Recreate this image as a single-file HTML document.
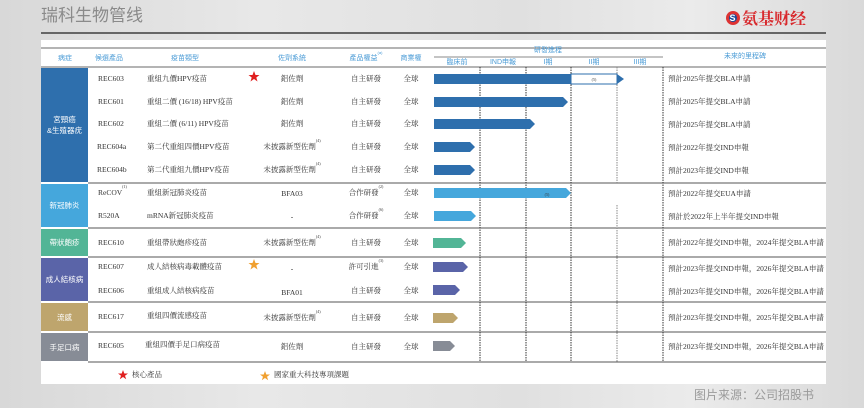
<!DOCTYPE html>
<html><head><meta charset="utf-8">
<style>
*{margin:0;padding:0;box-sizing:border-box}
body{width:864px;height:408px;overflow:hidden;background:#e2e2e2;position:relative;font-family:"Liberation Serif","Noto Serif CJK SC","Noto Sans CJK TC",serif;color:#333}
.a{position:absolute;white-space:nowrap}
.t{font-size:7.5px;line-height:10px}
.h{font-size:7px;color:#4a9bd6;font-family:"Liberation Sans","Noto Sans CJK TC",sans-serif;transform:translateX(-50%);line-height:9px}
.c{transform:translateX(-50%)}
sup{font-size:4px;line-height:0;vertical-align:top;position:relative;top:-1px}
.d{position:absolute;left:41px;width:47px;color:#fff;font-size:7.5px;font-family:"Liberation Sans","Noto Sans CJK TC",sans-serif;display:flex;align-items:center;justify-content:center;text-align:center;line-height:11px}
</style></head><body>
<div style="position:absolute;left:0;top:0;width:864px;height:408px;background:linear-gradient(90deg,#d8d8d8,#e8e8e8 30%,#e0e0e0 60%,#ebebeb 80%,#d9d9d9)"></div>
<div class="a" style="left:41px;top:5px;font-size:17px;color:#8a8a8a;font-family:'Liberation Sans','Noto Sans CJK SC',sans-serif;line-height:22px">瑞科生物管线</div>
<div class="a" style="left:726px;top:11px;width:14px;height:14px;border-radius:50%;background:#d33"><div style="position:absolute;left:3px;top:3px;width:8px;height:8px;border-radius:50%;background:#1d4c9a"></div><div style="position:absolute;left:3.5px;top:2px;color:#fff;font-size:9px;font-weight:bold;line-height:10px;font-family:'Liberation Sans'">S</div></div>
<div class="a" style="left:742px;top:7px;font-size:16px;font-weight:bold;color:#d8282c;font-family:'Noto Serif CJK SC',serif;line-height:22px">氨基财经</div>
<div class="a" style="left:41px;top:32px;width:785px;height:2px;background:#666"></div>
<div class="a" style="left:41px;top:40px;width:785px;height:344px;background:#fff"></div>
<svg class="a" style="left:0;top:0" width="864" height="408">
<line x1="41" y1="48" x2="826" y2="48" stroke="#888" stroke-width="1.2"/>
<line x1="41" y1="67" x2="826" y2="67" stroke="#888" stroke-width="1.2"/>
<line x1="434" y1="57" x2="663" y2="57" stroke="#888" stroke-width="1"/>
<g stroke="#555" stroke-width="1">
<line x1="88" y1="183" x2="826" y2="183"/><line x1="88" y1="228" x2="826" y2="228"/>
<line x1="88" y1="257" x2="826" y2="257"/><line x1="88" y1="302" x2="826" y2="302"/>
<line x1="88" y1="332" x2="826" y2="332"/><line x1="88" y1="362" x2="826" y2="362"/>
</g>
<g stroke="#333" stroke-width="1" stroke-dasharray="1.5,1">
<line x1="480" y1="67" x2="480" y2="362"/><line x1="526" y1="67" x2="526" y2="362"/>
<line x1="571" y1="67" x2="571" y2="362"/><line x1="663" y1="67" x2="663" y2="362"/>
</g>
<g stroke="#888" stroke-width="1" stroke-dasharray="1.5,1">
<line x1="617" y1="67" x2="617" y2="183"/><line x1="617" y1="205" x2="617" y2="362"/>
</g>
<g fill="#2e6fad">
<polygon points="434,74 571,74 571,84 434,84"/>
<rect x="571" y="74" width="46" height="10" fill="#fff" stroke="#2e6fad" stroke-width="1"/>
<polygon points="617,74 624,79 617,84"/>
<polygon points="434,97 563,97 568,102 563,107 434,107"/>
<polygon points="434,119 530,119 535,124 530,129 434,129"/>
<polygon points="434,142 470,142 475,147 470,152 434,152"/>
<polygon points="434,165 470,165 475,170 470,175 434,175"/>
</g>
<polygon fill="#45a7dc" points="434,188 566,188 571,193 566,198 434,198"/>
<polygon fill="#45a7dc" points="434,211 471,211 476,216 471,221 434,221"/>
<polygon fill="#52b596" points="433,238 461,238 466,243 461,248 433,248"/>
<polygon fill="#5a64a8" points="433,262 463,262 468,267 463,272 433,272"/>
<polygon fill="#5a64a8" points="433,285 455,285 460,290 455,295 433,295"/>
<polygon fill="#bea56d" points="433,313 453,313 458,318 453,323 433,323"/>
<polygon fill="#878c96" points="433,341 450,341 455,346 450,351 433,351"/>
<polygon fill="#e02020" points="254,71 255.5,75 259.5,75 256.3,77.5 257.5,81.5 254,79 250.5,81.5 251.7,77.5 248.5,75 252.5,75"/>
<polygon fill="#f0a030" points="254,259 255.5,263 259.5,263 256.3,265.5 257.5,269.5 254,267 250.5,269.5 251.7,265.5 248.5,263 252.5,263"/>
<polygon fill="#e02020" points="123,370 124.3,373.5 128,373.5 125,375.7 126.2,379.3 123,377 119.8,379.3 121,375.7 118,373.5 121.7,373.5"/>
<polygon fill="#f0a030" points="265,371 266.3,374.5 270,374.5 267,376.7 268.2,380.3 265,378 261.8,380.3 263,376.7 260,374.5 263.7,374.5"/>
<text x="594" y="81" font-size="4" fill="#333" text-anchor="middle">(5)</text>
<text x="547" y="196" font-size="4" fill="#333" text-anchor="middle">(5)</text>
</svg>
<div class="d" style="top:68px;height:114px;background:#2e6fad">宮頸癌<br>&amp;生殖器疣</div>
<div class="d" style="top:184px;height:43px;background:#45a7dc">新冠肺炎</div>
<div class="d" style="top:229px;height:27px;background:#52b596">帶狀皰疹</div>
<div class="d" style="top:258px;height:43px;background:#5a64a8">成人結核病</div>
<div class="d" style="top:303px;height:28px;background:#bea56d">流感</div>
<div class="d" style="top:333px;height:28px;background:#878c96">手足口病</div>
<div class="a h" style="left:65px;top:54px">病症</div>
<div class="a h" style="left:109px;top:54px">候選產品</div>
<div class="a h" style="left:185px;top:54px">疫苗類型</div>
<div class="a h" style="left:292px;top:54px">佐劑系統</div>
<div class="a h" style="left:366px;top:54px">產品權益<sup>(a)</sup></div>
<div class="a h" style="left:411px;top:54px">商業權</div>
<div class="a h" style="left:548px;top:46px">研發進程</div>
<div class="a h" style="left:457px;top:58px">臨床前</div>
<div class="a h" style="left:503px;top:58px">IND申報</div>
<div class="a h" style="left:548px;top:58px">I期</div>
<div class="a h" style="left:594px;top:58px">II期</div>
<div class="a h" style="left:640px;top:58px">III期</div>
<div class="a h" style="left:745px;top:52px">未來的里程碑</div>
<div class="a t" style="left:132px;top:370px">核心產品</div>
<div class="a t" style="left:274px;top:370px">國家重大科技專項課題</div>
<div class="a" style="left:694px;top:386px;font-size:12px;color:#9a9a9a;font-family:'Liberation Sans','Noto Sans CJK SC',sans-serif">图片来源：公司招股书</div>
<div class="a t" style="left:98px;top:74px">REC603</div><div class="a t" style="left:147px;top:74px">重組九價HPV疫苗</div><div class="a t c" style="left:292px;top:74px">鋁佐劑</div><div class="a t c" style="left:366px;top:74px">自主研發</div><div class="a t c" style="left:411px;top:74px">全球</div><div class="a t" style="left:668px;top:74px">預計2025年提交BLA申請</div>
<div class="a t" style="left:98px;top:97px">REC601</div><div class="a t" style="left:147px;top:97px">重組二價 (16/18) HPV疫苗</div><div class="a t c" style="left:292px;top:97px">鋁佐劑</div><div class="a t c" style="left:366px;top:97px">自主研發</div><div class="a t c" style="left:411px;top:97px">全球</div><div class="a t" style="left:668px;top:97px">預計2025年提交BLA申請</div>
<div class="a t" style="left:98px;top:119px">REC602</div><div class="a t" style="left:147px;top:119px">重組二價 (6/11) HPV疫苗</div><div class="a t c" style="left:292px;top:119px">鋁佐劑</div><div class="a t c" style="left:366px;top:119px">自主研發</div><div class="a t c" style="left:411px;top:119px">全球</div><div class="a t" style="left:668px;top:120px">預計2025年提交BLA申請</div>
<div class="a t" style="left:97px;top:142px">REC604a</div><div class="a t" style="left:147px;top:142px">第二代重組四價HPV疫苗</div><div class="a t c" style="left:292px;top:142px">未披露新型佐劑<sup>(4)</sup></div><div class="a t c" style="left:366px;top:142px">自主研發</div><div class="a t c" style="left:411px;top:142px">全球</div><div class="a t" style="left:668px;top:143px">預計2022年提交IND申報</div>
<div class="a t" style="left:97px;top:165px">REC604b</div><div class="a t" style="left:147px;top:165px">第二代重組九價HPV疫苗</div><div class="a t c" style="left:292px;top:165px">未披露新型佐劑<sup>(4)</sup></div><div class="a t c" style="left:366px;top:165px">自主研發</div><div class="a t c" style="left:411px;top:165px">全球</div><div class="a t" style="left:668px;top:166px">預計2023年提交IND申報</div>
<div class="a t" style="left:98px;top:188px">ReCOV<sup>(1)</sup></div><div class="a t" style="left:147px;top:188px">重組新冠肺炎疫苗</div><div class="a t c" style="left:292px;top:189px">BFA03</div><div class="a t c" style="left:366px;top:188px">合作研發<sup>(2)</sup></div><div class="a t c" style="left:411px;top:188px">全球</div><div class="a t" style="left:668px;top:189px">預計2022年提交EUA申請</div>
<div class="a t" style="left:98px;top:211px">R520A</div><div class="a t" style="left:147px;top:211px">mRNA新冠肺炎疫苗</div><div class="a t c" style="left:292px;top:212px">-</div><div class="a t c" style="left:366px;top:211px">合作研發<sup>(6)</sup></div><div class="a t c" style="left:411px;top:211px">全球</div><div class="a t" style="left:668px;top:212px">預計於2022年上半年提交IND申報</div>
<div class="a t" style="left:98px;top:238px">REC610</div><div class="a t" style="left:147px;top:238px">重組帶狀皰疹疫苗</div><div class="a t c" style="left:292px;top:238px">未披露新型佐劑<sup>(4)</sup></div><div class="a t c" style="left:366px;top:238px">自主研發</div><div class="a t c" style="left:411px;top:238px">全球</div><div class="a t" style="left:668px;top:238px">預計2022年提交IND申報，2024年提交BLA申請</div>
<div class="a t" style="left:98px;top:262px">REC607</div><div class="a t" style="left:147px;top:262px">成人結核病毒載體疫苗</div><div class="a t c" style="left:292px;top:264px">-</div><div class="a t c" style="left:366px;top:262px">許可引進<sup>(3)</sup></div><div class="a t c" style="left:411px;top:262px">全球</div><div class="a t" style="left:668px;top:264px">預計2023年提交IND申報，2026年提交BLA申請</div>
<div class="a t" style="left:98px;top:286px">REC606</div><div class="a t" style="left:147px;top:286px">重組成人結核病疫苗</div><div class="a t c" style="left:292px;top:288px">BFA01</div><div class="a t c" style="left:366px;top:286px">自主研發</div><div class="a t c" style="left:411px;top:286px">全球</div><div class="a t" style="left:668px;top:287px">預計2023年提交IND申報，2026年提交BLA申請</div>
<div class="a t" style="left:98px;top:312px">REC617</div><div class="a t" style="left:147px;top:311px">重組四價流感疫苗</div><div class="a t c" style="left:292px;top:313px">未披露新型佐劑<sup>(4)</sup></div><div class="a t c" style="left:366px;top:313px">自主研發</div><div class="a t c" style="left:411px;top:313px">全球</div><div class="a t" style="left:668px;top:313px">預計2023年提交IND申報，2025年提交BLA申請</div>
<div class="a t" style="left:98px;top:341px">REC605</div><div class="a t" style="left:145px;top:340px">重組四價手足口病疫苗</div><div class="a t c" style="left:292px;top:342px">鋁佐劑</div><div class="a t c" style="left:366px;top:342px">自主研發</div><div class="a t c" style="left:411px;top:342px">全球</div><div class="a t" style="left:668px;top:342px">預計2023年提交IND申報，2026年提交BLA申請</div>
</body></html>
